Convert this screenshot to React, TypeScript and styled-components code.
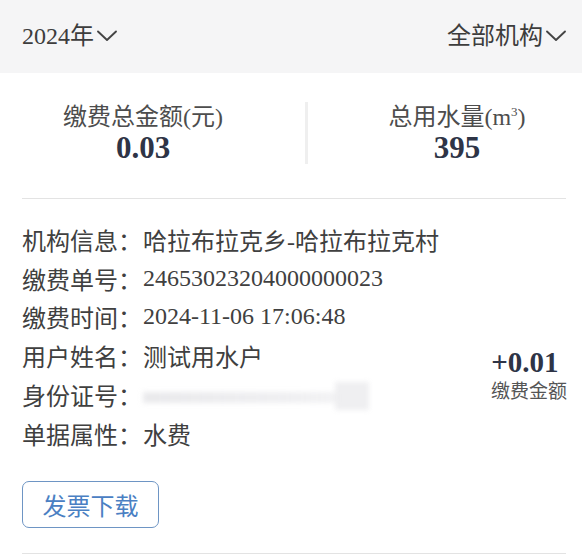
import React from "react";
import styled, { createGlobalStyle } from "styled-components";

const GlobalStyle = createGlobalStyle`
  html, body { margin: 0; padding: 0; background: #ffffff; }
  body {
    font-family: "Liberation Serif", "Noto Sans CJK SC", serif;
    color: #3f3f3f;
  }
  * { box-sizing: border-box; }
`;

const Page = styled.div`
  width: 582px;
  background: #fff;
`;

const Header = styled.div`
  height: 73px;
  background: #f5f5f6;
  display: flex;
  align-items: center;
  justify-content: space-between;
  padding: 0 15px 2px 22px;
`;

const Picker = styled.div`
  display: flex;
  align-items: center;
  gap: 2px;
  font-size: 24px;
  line-height: 30px;
  color: #3d3d3d;
`;

const Chevron = () => (
  <svg width="22" height="14" viewBox="0 0 22 14" fill="none">
    <path d="M2 2.5 L11 11 L20 2.5" stroke="#444" strokeWidth="1.9" strokeLinecap="round" strokeLinejoin="round" />
  </svg>
);

const Stats = styled.div`
  display: flex;
  align-items: center;
  padding: 29px 0 34px;
`;

const StatCol = styled.div<{ $w: number; $ml?: number }>`
  width: ${(p) => p.$w}px;
  margin-left: ${(p) => p.$ml ?? 0}px;
  display: flex;
  flex-direction: column;
  align-items: center;
`;

const StatLabel = styled.div`
  font-size: 24px;
  line-height: 30px;
  color: #4d4d4d;
  sup { font-size: 13px; vertical-align: 9px; line-height: 0; }
`;

const StatValue = styled.div`
  font-size: 31px;
  line-height: 32px;
  font-weight: bold;
  color: #2e3446;
`;

const VDivider = styled.div`
  width: 3px;
  height: 62px;
  margin-left: 19px;
  background: #efefef;
`;

const HLine = styled.div`
  height: 1px;
  background: #e3e3e3;
  margin: 0 16px 0 22px;
`;

const Detail = styled.div`
  display: flex;
  justify-content: space-between;
  padding: 21px 15px 0 22px;
`;

const Rows = styled.div`
  display: flex;
  flex-direction: column;
`;

const Row = styled.div`
  display: flex;
  align-items: center;
  height: 38.8px;
  font-size: 24px;
  color: #404040;
  white-space: nowrap;
`;

const Label = styled.span`
  width: 121px;
  flex: none;
`;

const Blurred = styled.span`
  display: inline-block;
  width: 238px;
  height: 28px;
  filter: blur(2.5px);
  background:
    linear-gradient(90deg, rgba(228,228,231,0.8) 0%, rgba(234,234,237,0.75) 70%, rgba(238,238,240,0.7) 100%) 0 10px / 200px 11px no-repeat,
    linear-gradient(#efeff1, #efeff1) 192px 0 / 34px 28px no-repeat;
  border-radius: 4px;
  margin-top: 2px;
`;

const Amount = styled.div`
  display: flex;
  flex-direction: column;
  align-items: center;
  padding-top: 126px;
`;

const AmountValue = styled.div`
  font-size: 29px;
  line-height: 32px;
  font-weight: bold;
  color: #2e3446;
  margin-right: 8px;
`;

const AmountLabel = styled.div`
  font-size: 19px;
  line-height: 28px;
  color: #555;
`;

const Actions = styled.div`
  padding: 28px 22px 25px;
`;

const Button = styled.button`
  width: 137px;
  height: 47px;
  border: 1px solid #6e95c4;
  border-radius: 7px;
  background: #fff;
  color: #4a80c3;
  font-family: "Noto Sans CJK SC", sans-serif;
  font-size: 24px;
  padding: 0;
  display: flex;
  align-items: center;
  justify-content: center;
`;

const rows: { label: string; value?: string; blur?: boolean }[] = [
  { label: "机构信息：", value: "哈拉布拉克乡-哈拉布拉克村" },
  { label: "缴费单号：", value: "24653023204000000023" },
  { label: "缴费时间：", value: "2024-11-06 17:06:48" },
  { label: "用户姓名：", value: "测试用水户" },
  { label: "身份证号：", blur: true },
  { label: "单据属性：", value: "水费" },
];

export default function App() {
  return (
    <Page>
      <GlobalStyle />
      <Header>
        <Picker>
          2024年
          <Chevron />
        </Picker>
        <Picker>
          全部机构
          <Chevron />
        </Picker>
      </Header>
      <Stats>
        <StatCol $w={286}>
          <StatLabel>缴费总金额(元)</StatLabel>
          <StatValue>0.03</StatValue>
        </StatCol>
        <VDivider />
        <StatCol $w={250} $ml={24}>
          <StatLabel>
            总用水量(m<sup>3</sup>)
          </StatLabel>
          <StatValue>395</StatValue>
        </StatCol>
      </Stats>
      <HLine />
      <Detail>
        <Rows>
          {rows.map((r) => (
            <Row key={r.label}>
              <Label>{r.label}</Label>
              {r.blur ? <Blurred /> : <span>{r.value}</span>}
            </Row>
          ))}
        </Rows>
        <Amount>
          <AmountValue>+0.01</AmountValue>
          <AmountLabel>缴费金额</AmountLabel>
        </Amount>
      </Detail>
      <Actions>
        <Button>发票下载</Button>
      </Actions>
      <HLine />
    </Page>
  );
}
